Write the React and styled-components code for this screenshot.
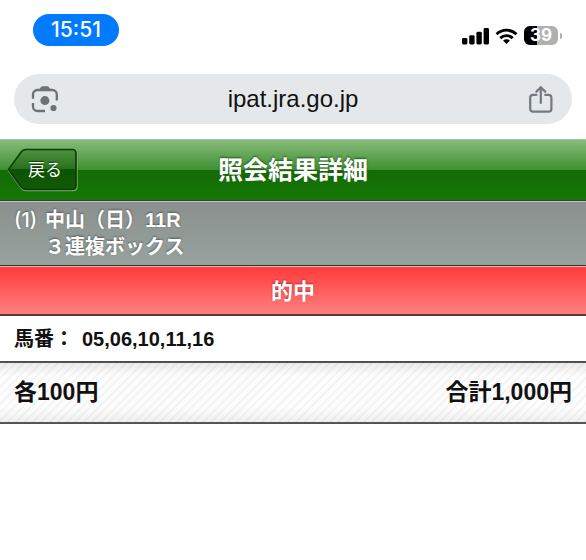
import React from "react";
import styled, { createGlobalStyle } from "styled-components";

const App = () => {
  return (
    <Page>
      <GlobalStyle />
      <StatusBar>
        <Clock>{STATUS.time}</Clock>
        <StatusIcons>
          <SignalIcon />
          <WifiIcon />
          <Battery level={STATUS.battery} />
        </StatusIcons>
      </StatusBar>
      <AddressBar>
        <IconButton type="button" aria-label="カメラで検索">
          <LensIcon />
        </IconButton>
        <Address type="text" aria-label="アドレス" defaultValue="ipat.jra.go.jp" />
        <IconButton type="button" aria-label="共有">
          <ShareIcon />
        </IconButton>
      </AddressBar>
      <Header>
        <BackButton type="button">
          <BackShape />
          <BackLabel>戻る</BackLabel>
        </BackButton>
        <Title>照会結果詳細</Title>
      </Header>
      <Race>
        <RaceNo>({BET.no})</RaceNo>
        <span>{BET.race}</span>
        <BetType>{BET.type}</BetType>
      </Race>
      <Result>{BET.result}</Result>
      <Horses>
        <dt>馬番：</dt>
        <dd>{BET.horses.join(",")}</dd>
      </Horses>
      <Amount>
        <span>各{BET.unit}円</span>
        <span>合計{BET.total}円</span>
      </Amount>
    </Page>
  );
};

export default App;

const SignalIcon = () => (
  <svg width="27" height="18" viewBox="0 0 27 18" aria-hidden="true">
    <rect x="0" y="11" width="5.4" height="6.5" rx="1.4" />
    <rect x="7.2" y="8.2" width="5.4" height="9.3" rx="1.4" />
    <rect x="14.4" y="4.8" width="5.4" height="12.7" rx="1.4" />
    <rect x="21.6" y="1" width="5.4" height="16.5" rx="1.4" />
  </svg>
);

const WifiIcon = () => (
  <svg width="23" height="18" viewBox="0 0 24 18" aria-hidden="true">
    <g fill="none" stroke="#000" strokeWidth="3">
      <path d="M1.6 7.2 A14.8 14.8 0 0 1 22.4 7.2" />
      <path d="M5.5 11.2 A9.3 9.3 0 0 1 18.5 11.2" />
    </g>
    <path d="M12 17.3 L8.4 13.8 A5.1 5.1 0 0 1 15.6 13.8 Z" />
  </svg>
);

const Battery = ({ level }) => (
  <BatteryWrapper>
    <BatteryBody>
      <BatteryFill style={{ width: level + "%" }} />
      <BatteryText>{level}</BatteryText>
    </BatteryBody>
    <BatteryCap />
  </BatteryWrapper>
);

const LensIcon = () => (
  <svg width="28" height="28" viewBox="0 0 28 28" aria-hidden="true">
    <g fill="none" stroke="#6a7376" strokeWidth="2.3">
      <path d="M2 13.8 V9.4 A4.4 4.4 0 0 1 6.4 5 H21.4 A4.4 4.4 0 0 1 25.8 9.4 V15.6" />
      <path d="M2 18 V21.6 A4.4 4.4 0 0 0 6.4 26 H14" />
    </g>
    <path
      d="M8 5 L10.2 1.8 Q10.6 1.2 11.4 1.2 H16.4 Q17.2 1.2 17.6 1.8 L19.8 5 Z"
      fill="#6a7376"
    />
    <circle cx="13.9" cy="15.6" r="4.5" fill="#6a7376" />
    <circle cx="22.5" cy="23" r="3.1" fill="#6a7376" />
  </svg>
);

const ShareIcon = () => (
  <svg width="24" height="28" viewBox="0 0 24 28" aria-hidden="true">
    <g
      fill="none"
      stroke="#727980"
      strokeWidth="2.2"
      strokeLinecap="round"
      strokeLinejoin="round"
    >
      <path d="M7.4 9.8 H4.2 A3 3 0 0 0 1.2 12.8 V23.7 A3 3 0 0 0 4.2 26.7 H19.4 A3 3 0 0 0 22.4 23.7 V12.8 A3 3 0 0 0 19.4 9.8 H16.2" />
      <path d="M11.8 18 V2.2 M7.4 6.6 L11.8 2.2 L16.2 6.6" />
    </g>
  </svg>
);

const BackShape = () => (
  <BackSvg width="72" height="44" viewBox="0 0 72 44" aria-hidden="true">
    <defs>
      <linearGradient id="back" x1="0" y1="0" x2="0" y2="1">
        <stop offset="0" stopColor="#4f9240" />
        <stop offset=".5" stopColor="#286f1b" />
        <stop offset=".5" stopColor="#0c5403" />
        <stop offset="1" stopColor="#115a07" />
      </linearGradient>
    </defs>
    <path
      d="M1.5 22.5 L14.5 4.5 Q16.5 2.5 19 2.5 H66 Q70 2.5 70 6.5 V38.5 Q70 42.5 66 42.5 H19 Q16.5 42.5 14.5 40.5 Z"
      fill="none"
      stroke="#7cb06f"
      strokeWidth="1.4"
    />
    <path
      d="M1.5 21.5 L14.5 3.5 Q16.5 1.5 19 1.5 H65 Q69 1.5 69 5.5 V37.5 Q69 41.5 65 41.5 H19 Q16.5 41.5 14.5 39.5 Z"
      fill="url(#back)"
      stroke="#0c3c07"
      strokeWidth="1.6"
    />
  </BackSvg>
);

const GlobalStyle = createGlobalStyle`
  * {
    box-sizing: border-box;
  }

  body {
    margin: 0;
    background: #fff;
    color: #111;
    font-family: "Liberation Sans", "Noto Sans CJK JP", sans-serif;
  }
`;

const Page = styled.main`
  width: 100%;
`;

const StatusBar = styled.div`
  display: flex;
  align-items: flex-start;
  justify-content: space-between;
  padding: 14px 24px 0 33px;
  height: 74px;
`;

const Clock = styled.time`
  width: 86px;
  border-radius: 16px;
  background: #007aff;
  color: #fff;
  font-family: Inter, sans-serif;
  font-size: 21px;
  font-weight: 500;
  line-height: 32px;
  text-align: center;
`;

const StatusIcons = styled.div`
  display: flex;
  align-items: center;
  gap: 6px;
  padding-top: 12px;
`;

const BatteryWrapper = styled.div`
  display: flex;
  align-items: center;
  gap: 2px;
`;

const BatteryBody = styled.div`
  position: relative;
  width: 34px;
  height: 19px;
  overflow: hidden;
  border-radius: 6px;
  background: #b0b0b0;
`;

const BatteryFill = styled.div`
  height: 100%;
  background: #000;
`;

const BatteryText = styled.span`
  position: absolute;
  inset: 0;
  color: #fff;
  font-family: Inter, sans-serif;
  font-size: 17px;
  font-weight: 700;
  line-height: 19px;
  text-align: center;
`;

const BatteryCap = styled.div`
  width: 2px;
  height: 6px;
  border-radius: 0 2px 2px 0;
  background: #b0b0b0;
`;

const AddressBar = styled.div`
  display: flex;
  align-items: center;
  justify-content: space-between;
  margin: 0 14px 15px;
  padding: 0 17px;
  height: 50px;
  border-radius: 25px;
  background: #e4e8eb;
`;

const IconButton = styled.button`
  display: flex;
  justify-content: center;
  width: 28px;
  padding: 0;
  border: none;
  background: none;
`;

const Address = styled.input`
  flex: 1;
  min-width: 0;
  padding: 0;
  border: none;
  background: none;
  color: #111;
  font-family: inherit;
  font-size: 24px;
  text-align: center;
`;

const Header = styled.header`
  display: grid;
  grid-template-columns: 1fr auto 1fr;
  align-items: center;
  height: 62px;
  padding: 0 7px;
  border-top: 1px solid #a5caa0;
  border-bottom: 1px solid #3a3a3c;
  background: linear-gradient(#88bb7c, #3f9030 50%, #146b05 50%, #157806);
`;

const BackButton = styled.button`
  position: relative;
  width: 72px;
  height: 44px;
  padding: 0 0 3px 4px;
  border: none;
  background: none;
  color: #fff;
  font-family: inherit;
  font-size: 17px;
`;

const BackSvg = styled.svg`
  position: absolute;
  inset: 0;
`;

const BackLabel = styled.span`
  position: relative;
  text-shadow: 0 -1px 1px #063a02;
`;

const Title = styled.h1`
  margin: 0;
  color: #fff;
  font-size: 25px;
  font-weight: 700;
  line-height: 36px;
  text-shadow: 0 -1px 2px #24551d;
`;

const Race = styled.section`
  display: grid;
  grid-template-columns: auto 1fr;
  column-gap: 8px;
  padding: 5px 14px 4px;
  border-top: 1px solid #c4c4c4;
  border-bottom: 1px solid #2c3634;
  background: linear-gradient(#8a908e, #98a29d);
  color: #fff;
  font-size: 20px;
  font-weight: 700;
  line-height: 27px;
  text-shadow: 0 -1px 2px #555c59;
`;

const RaceNo = styled.span`
  font-family: Inter, sans-serif;
  font-weight: 500;
`;

const BetType = styled.span`
  grid-column: 2;
`;

const Result = styled.div`
  padding-top: 3px;
  border-top: 1px solid #e9b5b5;
  border-bottom: 2px solid #5a3c3c;
  background: linear-gradient(#ff3b3b, #ff8080);
  color: #fff;
  font-size: 22px;
  font-weight: 700;
  line-height: 44px;
  text-align: center;
  text-shadow: 0 -1px 2px #a33;
`;

const Horses = styled.dl`
  display: flex;
  gap: 8px;
  margin: 0;
  padding: 2px 14px 0;
  border-bottom: 2px solid #505050;
  font-size: 20px;
  font-weight: 700;
  line-height: 43px;

  dd {
    margin: 0;
  }
`;

const Amount = styled.div`
  display: flex;
  justify-content: space-between;
  padding: 0 14px;
  border-bottom: 2px solid #555;
  background:
    linear-gradient(rgba(0, 0, 0, 0.07), transparent 22%, transparent 75%, rgba(0, 0, 0, 0.05)),
    repeating-linear-gradient(135deg, #fdfdfd 0 4px, #f4f4f4 4px 6px);
  font-size: 23px;
  font-weight: 700;
  line-height: 59px;
`;

const STATUS = {
  time: "15:51",
  battery: 39,
};

const BET = {
  no: 1,
  race: "中山（日）11R",
  type: "３連複ボックス",
  result: "的中",
  horses: ["05", "06", "10", "11", "16"],
  unit: "100",
  total: "1,000",
};
